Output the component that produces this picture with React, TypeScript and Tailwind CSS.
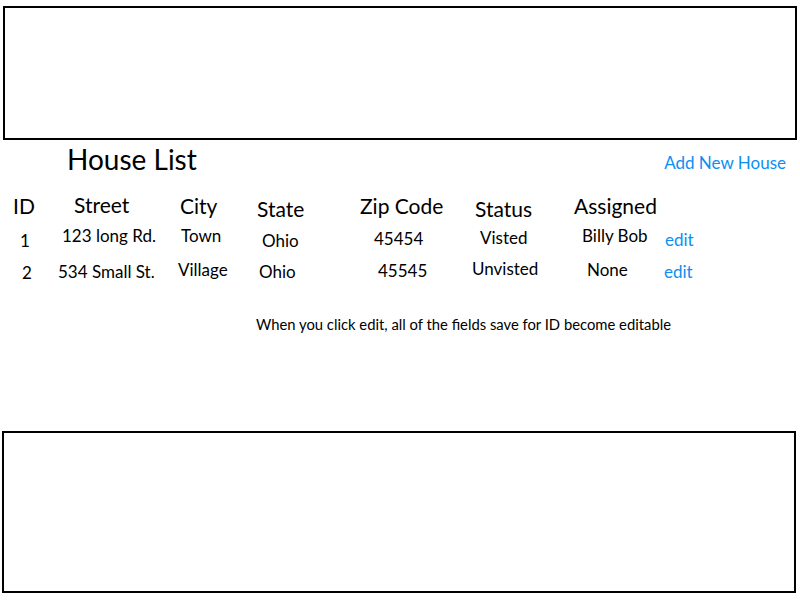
const cols =
  "grid grid-cols-[55px_115px_80px_100px_115px_100px_90px_1fr] items-start";

const Cell = ({ className, children }: { className: string; children: React.ReactNode }) => (
  <div className={"leading-none whitespace-nowrap " + className}>{children}</div>
);

export default function App() {
  return (
    <div className="w-[800px] h-[600px] bg-white text-black font-['Lato','Open_Sans',sans-serif] overflow-hidden">
      {/* header placeholder */}
      <div className="ml-[3px] mt-[6px] h-[134px] w-[794px] border-2 border-black" />

      <div className="flex items-start h-[50px]">
        <h1 className="ml-[67px] mt-[5px] text-[28px] leading-none font-normal">House List</h1>
        <a className="ml-auto mr-[14px] mt-[14px] text-[17px] leading-none text-[#0c8ff2]">
          Add New House
        </a>
      </div>

      <div className={cols + " h-[34px] text-[21px]"}>
        <Cell className="pl-[13px] mt-[5px]">ID</Cell>
        <Cell className="pl-[19px] mt-[4px]">Street</Cell>
        <Cell className="pl-[10px] mt-[5px]">City</Cell>
        <Cell className="pl-[7px] mt-[8px]">State</Cell>
        <Cell className="pl-[10px] mt-[5px]">Zip Code</Cell>
        <Cell className="pl-[10px] mt-[8px]">Status</Cell>
        <Cell className="pl-[9px] mt-[5px]">Assigned</Cell>
        <div />
      </div>

      <div className={cols + " h-[30px] text-[17px]"}>
        <Cell className="pl-[20px] mt-[8px]">1</Cell>
        <Cell className="pl-[7px] mt-[3px]">123 long Rd.</Cell>
        <Cell className="pl-[11px] mt-[3px]">Town</Cell>
        <Cell className="pl-[12px] mt-[8px]">Ohio</Cell>
        <Cell className="pl-[24px] mt-[6px]">45454</Cell>
        <Cell className="pl-[15px] mt-[5px]">Visted</Cell>
        <Cell className="pl-[17px] mt-[3px]">Billy Bob</Cell>
        <Cell className="pl-[10px] mt-[7px] text-[#0c8ff2]">edit</Cell>
      </div>

      <div className={cols + " h-[30px] text-[17px]"}>
        <Cell className="pl-[22px] mt-[10px]">2</Cell>
        <Cell className="pl-[3px] mt-[9px]">534 Small St.</Cell>
        <Cell className="pl-[8px] mt-[7px]">Village</Cell>
        <Cell className="pl-[9px] mt-[9px]">Ohio</Cell>
        <Cell className="pl-[28px] mt-[8px]">45545</Cell>
        <Cell className="pl-[7px] mt-[6px]">Unvisted</Cell>
        <Cell className="pl-[22px] mt-[7px]">None</Cell>
        <Cell className="pl-[9px] mt-[9px] text-[#0c8ff2]">edit</Cell>
      </div>

      <p className="ml-[256px] mt-[33px] text-[14.8px] leading-none">
        When you click edit, all of the fields save for ID become editable
      </p>

      {/* footer placeholder */}
      <div className="ml-[2px] mt-[99px] h-[162px] w-[794px] border-2 border-black" />
    </div>
  );
}
